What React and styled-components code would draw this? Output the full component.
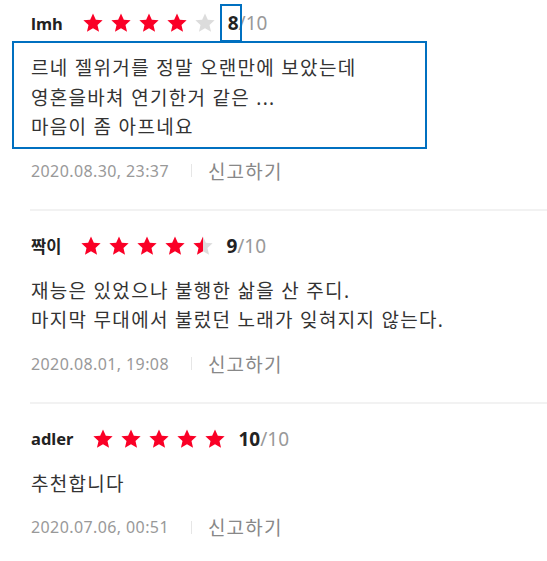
import React from "react";
import styled, { createGlobalStyle } from "styled-components";

const GlobalStyle = createGlobalStyle`
	body {
		margin: 0;
		background: #fff;
		font-family: "Noto Sans", "Noto Sans CJK KR", sans-serif;
	}
`;

const reviews = [
	{
		name: "lmh",
		rating: 8,
		text: ["르네 젤위거를 정말 오랜만에 보았는데", "영혼을바쳐 연기한거 같은 ...", "마음이 좀 아프네요"],
		date: "2020.08.30, 23:37",
		marked: true,
	},
	{
		name: "짝이",
		rating: 9,
		text: ["재능은 있었으나 불행한 삶을 산 주디.", "마지막 무대에서 불렀던 노래가 잊혀지지 않는다."],
		date: "2020.08.01, 19:08",
	},
	{
		name: "adler",
		rating: 10,
		text: ["추천합니다"],
		date: "2020.07.06, 00:51",
	},
];

const List = styled.ul`
	list-style: none;
	margin: 0;
	padding: 0;
`;

const Review = styled.li`
	margin-left: 30px;
	padding: 20px 0 26px 1px;
	border-bottom: 2px solid #f2f2f2;

	&:first-child {
		padding-top: 8px;
	}
`;

const Head = styled.div`
	display: flex;
	align-items: center;
	height: 30px;
`;

const Name = styled.strong`
	font-size: 16.5px;
	font-weight: 700;
	color: #222;
	margin-right: 19px;
`;

const Stars = styled.div`
	display: flex;
	gap: 6px;
	margin-right: 12px;

	svg {
		width: 22px;
		height: 22px;
		display: block;
	}
`;

const Score = styled.span`
	position: relative;
	font-size: 19px;
	color: #999;

	b {
		position: relative;
		color: #222;
		font-weight: 700;
	}

	${(p) =>
		p.$marked &&
		`
		b::after {
			content: "";
			position: absolute;
			left: -8px;
			top: -6px;
			width: 18px;
			height: 34px;
			border: 2px solid #0070c0;
		}
	`}
`;

const Body = styled.p`
	position: relative;
	margin: 16px 0 0;
	font-size: 19px;
	line-height: 29.5px;
	letter-spacing: 1.3px;
	color: #333;

	${(p) =>
		p.$marked &&
		`
		&::after {
			content: "";
			position: absolute;
			left: -19px;
			top: -13px;
			width: 411px;
			bottom: -6px;
			border: 2px solid #0070c0;
		}
	`}
`;

const Meta = styled.div`
	display: flex;
	align-items: center;
	margin-top: 16px;
	height: 24px;
	color: #999;
`;

const Date = styled.span`
	font-size: 16px;
	letter-spacing: 0.4px;
`;

const Sep = styled.span`
	width: 1px;
	height: 13px;
	background: #e6e6e6;
	margin: 0 16px 0 22px;
`;

const Report = styled.button`
	border: none;
	background: none;
	padding: 0;
	font-family: inherit;
	font-size: 19px;
	letter-spacing: 1.2px;
	color: #888;
`;

const STAR = "M12 1.5l3.1 6.9 7.4.7-5.6 5 1.7 7.4L12 17.6 5.4 21.5l1.7-7.4-5.6-5 7.4-.7z";

const Star = ({ fill, id }) => (
	<svg viewBox="0 0 24 24">
		<defs>
			<linearGradient id={id}>
				<stop offset={fill} stopColor="#fa0026" />
				<stop offset={fill} stopColor="#dcdcdc" />
			</linearGradient>
		</defs>
		<path d={STAR} fill={`url(#${id})`} />
	</svg>
);

const Rating = ({ value, uid }) => (
	<Stars>
		{[0, 1, 2, 3, 4].map((i) => {
			const f = Math.max(0, Math.min(1, value / 2 - i));
			return <Star key={i} fill={f} id={`${uid}-${i}`} />;
		})}
	</Stars>
);

export default function App() {
	return (
		<>
			<GlobalStyle />
			<List>
				{reviews.map((r, idx) => (
					<Review key={idx}>
						<Head>
							<Name>{r.name}</Name>
							<Rating value={r.rating} uid={`s${idx}`} />
							<Score $marked={r.marked}>
								<b>{r.rating}</b>/10
							</Score>
						</Head>
						<Body $marked={r.marked}>
							{r.text.map((line, i) => (
								<React.Fragment key={i}>
									{i > 0 && <br />}
									{line}
								</React.Fragment>
							))}
						</Body>
						<Meta>
							<Date>{r.date}</Date>
							<Sep />
							<Report>신고하기</Report>
						</Meta>
					</Review>
				))}
			</List>
		</>
	);
}
